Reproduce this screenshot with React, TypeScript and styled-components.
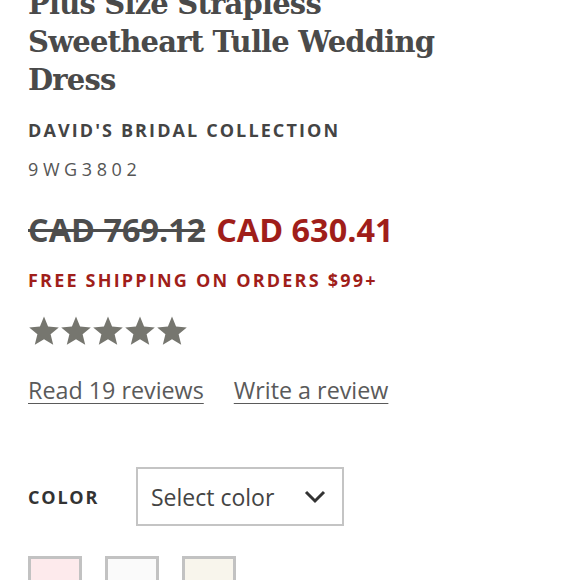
import React from "react";
import styled, { createGlobalStyle } from "styled-components";

const Global = createGlobalStyle`
  html, body { margin: 0; padding: 0; background: #fff; }
  body { font-family: "Open Sans", "Liberation Sans", sans-serif; overflow: hidden; }
`;

const Page = styled.div`
  padding: 0 28px;
  display: flex;
  flex-direction: column;
  width: 580px;
  height: 580px;
  overflow: hidden;
  box-sizing: border-box;
  & > * { flex-shrink: 0; }
`;

const Title = styled.h1`
  margin: -15px 0 0;
  font-family: "DejaVu Serif", "Liberation Serif", serif;
  font-weight: 700;
  font-size: 29px;
  line-height: 38px;
  color: #4a4a4a;
  width: 440px;
  letter-spacing: -0.8px;
`;

const Brand = styled.div`
  margin-top: 19px;
  font-weight: 700;
  font-size: 18px;
  letter-spacing: 2.1px;
  color: #444;
  line-height: 24px;
`;

const Sku = styled.div`
  margin-top: 15px;
  font-size: 18px;
  letter-spacing: 4.6px;
  color: #555;
  line-height: 24px;
`;

const PriceRow = styled.div`
  margin-top: 28px;
  display: flex;
  gap: 11px;
  font-weight: 700;
  font-size: 32.4px;
  line-height: 40px;
`;

const Price = styled.span<{ $old?: boolean }>`
  color: ${(p) => (p.$old ? "#4d4d4d" : "#a01e1a")};
  text-decoration: ${(p) => (p.$old ? "line-through" : "none")};
  text-decoration-thickness: 3px;
`;

const Shipping = styled.div`
  margin-top: 19px;
  font-weight: 700;
  font-size: 18px;
  letter-spacing: 2.2px;
  color: #a01e1a;
  line-height: 24px;
`;

const Stars = styled.div`
  margin-top: 19px;
  display: flex;
  height: 40px;
  align-items: center;
`;

const Links = styled.div`
  margin-top: 23px;
  display: flex;
  gap: 30px;
  font-size: 23.3px;
  line-height: 32px;
`;

const Link = styled.a`
  color: #5a5a5a;
  text-decoration: underline;
  text-underline-offset: 4px;
  text-decoration-thickness: 1px;
`;

const ColorRow = styled.div`
  margin-top: 61px;
  display: flex;
  align-items: center;
  gap: 36px;
`;

const Label = styled.div`
  font-weight: 700;
  font-size: 18px;
  letter-spacing: 1.8px;
  color: #333;
  width: 72px;
`;

const Select = styled.div`
  width: 208px;
  height: 59px;
  box-sizing: border-box;
  border: 2px solid #c4c4c4;
  display: flex;
  align-items: center;
  justify-content: space-between;
  padding: 0 16px 0 13px;
  font-size: 23px;
  color: #444;
`;

const Swatches = styled.div`
  margin-top: 30px;
  display: flex;
  gap: 23px;
`;

const Swatch = styled.div<{ $c: string }>`
  width: 54px;
  height: 54px;
  box-sizing: border-box;
  border: 3px solid #c2c2c2;
  background: ${(p) => p.$c};
`;

const Star = () => (
  <svg width="32" height="32" viewBox="0 0 24 24">
    <path
      d="M12 1.2l3.05 7.5 8.05.6-6.15 5.2 1.95 7.85L12 18.1l-6.9 4.25 1.95-7.85L.9 9.3l8.05-.6z"
      fill="#76766f"
    />
  </svg>
);

export default function App() {
  return (
    <>
      <Global />
      <Page>
        <Title>Plus Size Strapless Sweetheart Tulle Wedding Dress</Title>
        <Brand>DAVID'S BRIDAL COLLECTION</Brand>
        <Sku>9WG3802</Sku>
        <PriceRow>
          <Price $old>CAD 769.12</Price>
          <Price>CAD 630.41</Price>
        </PriceRow>
        <Shipping>FREE SHIPPING ON ORDERS $99+</Shipping>
        <Stars>
          {[0, 1, 2, 3, 4].map((i) => (
            <Star key={i} />
          ))}
        </Stars>
        <Links>
          <Link>Read 19 reviews</Link>
          <Link>Write a review</Link>
        </Links>
        <ColorRow>
          <Label>COLOR</Label>
          <Select>
            <span>Select color</span>
            <svg width="22" height="14" viewBox="0 0 22 14">
              <path d="M2 2l9 9 9-9" fill="none" stroke="#333" strokeWidth="3" />
            </svg>
          </Select>
        </ColorRow>
        <Swatches>
          <Swatch $c="#fdeaec" />
          <Swatch $c="#fafafa" />
          <Swatch $c="#f8f5ec" />
        </Swatches>
      </Page>
    </>
  );
}
